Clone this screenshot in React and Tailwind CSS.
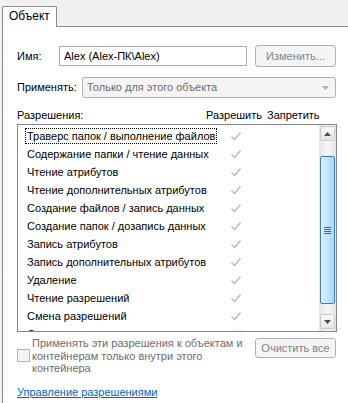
import React from 'react'

const perms = [
  'Траверс папок / выполнение файлов',
  'Содержание папки / чтение данных',
  'Чтение атрибутов',
  'Чтение дополнительных атрибутов',
  'Создание файлов / запись данных',
  'Создание папок / дозапись данных',
  'Запись атрибутов',
  'Запись дополнительных атрибутов',
  'Удаление',
  'Чтение разрешений',
  'Смена разрешений',
  'Смена владельца',
]

function Check(){
  return (
    <svg width="12" height="10" viewBox="0 0 12 10">
      <path d="M1.5 5.5 L4.5 8.5 L10.5 1.5" fill="none" stroke="#b8b8b8" strokeWidth="1.4" />
    </svg>
  )
}

function Arrow({ up }){
  return (
    <svg width="7" height="4" viewBox="0 0 7 4">
      {up ? <path d="M0 4 L3.5 0 L7 4 Z" fill="#4d4d4d" /> : <path d="M0 0 L3.5 4 L7 0 Z" fill="#4d4d4d" />}
    </svg>
  )
}

function Scrollbar(){
  return (
    <div className="w-[17px] flex flex-col items-stretch px-[1px] pt-[1px] bg-linear-to-r from-[#e6e6e6] via-[#f5f5f5] to-[#e6e6e6]">
      <div className="h-[15px] rounded-[2px] border border-[#c9c9c9] bg-linear-to-b from-[#fafafa] to-[#e4e4e4] flex items-center justify-center">
        <Arrow up />
      </div>
      <div className="h-[15px]" />
      <div className="h-[148px] rounded-[2px] border border-[#3c7fb1] bg-linear-to-r from-[#d9f0fc] via-[#bee6fd] to-[#a7d9f5] flex items-center justify-center">
        <div className="flex flex-col gap-[1px]">
          <div className="w-[7px] h-[1px] bg-[#3d6b8a]" />
          <div className="w-[7px] h-[1px] bg-[#3d6b8a]" />
          <div className="w-[7px] h-[1px] bg-[#3d6b8a]" />
          <div className="w-[7px] h-[1px] bg-[#3d6b8a]" />
        </div>
      </div>
      <div className="h-[10px]" />
      <div className="h-[15px] rounded-[2px] border border-[#c9c9c9] bg-linear-to-b from-[#fafafa] to-[#e4e4e4] flex items-center justify-center">
        <Arrow />
      </div>
    </div>
  )
}

export default function App(){
  return (
    <div className="w-[348px] h-[403px] overflow-hidden bg-[#f0f0f0] flex flex-col text-[11px] text-black whitespace-nowrap" style={{ fontFamily: '"Liberation Sans", Arial, sans-serif' }}>
      {/* Tab strip */}
      <div className="h-[27px] pt-[6px] pl-[2px] flex">
        <div className="relative z-10 w-[55px] h-[21px] bg-white border border-b-0 border-[#898c95] rounded-t-[2px] pl-[6px] leading-[19px] text-[12px]">
          Объект
        </div>
      </div>

      {/* Panel */}
      <div className="-mt-px ml-[2px] flex-1 bg-white border-l border-t border-[#898c95] pl-[14px] flex flex-col">
        {/* Name */}
        <div className="mt-[18px] h-[22px] flex items-center">
          <span className="w-[42px]">Имя:</span>
          <div className="w-[188px] h-[20px] border border-[#abadb3] pl-[4px] leading-[18px]">Alex (Alex-ПК\Alex)</div>
          <div className="ml-[8px] w-[81px] h-[22px] rounded-[3px] border border-[#adb2b5] bg-[#f4f4f4] text-[#838383] flex items-center justify-center">
            Изменить...
          </div>
        </div>

        {/* Apply to */}
        <div className="mt-[10px] h-[21px] flex items-center">
          <span className="w-[65px]">Применять:</span>
          <div className="w-[254px] h-[21px] rounded-[2px] border border-[#adb2b5] bg-[#f4f4f4] text-[#6d6d6d] pl-[4px] pr-[6px] flex items-center justify-between">
            <span>Только для этого объекта</span>
            <svg width="7" height="4" viewBox="0 0 7 4"><path d="M0 0 L3.5 4 L7 0 Z" fill="#b0b0b0" /></svg>
          </div>
        </div>

        {/* Permissions header */}
        <div className="mt-[10px] h-[14px] leading-[14px] flex">
          <span className="w-[189px]">Разрешения:</span>
          <span className="w-[61px]">Разрешить</span>
          <span>Запретить</span>
        </div>

        {/* List */}
        <div className="mt-[2px] w-[320px] h-[208px] border border-[#828790] flex overflow-hidden">
          <div className="flex-1 pt-[2px] overflow-hidden">
            {perms.map((p, i) => (
              <div key={p} className="h-[18px] flex items-center">
                <div className="w-[210px] pl-[7px]">
                  <span className={`px-[1px] leading-[14px] inline-block border ${i === 0 ? 'border-dotted border-black' : 'border-transparent'}`}>{p}</span>
                </div>
                <div className="w-[16px] flex justify-center"><Check /></div>
              </div>
            ))}
          </div>
          <Scrollbar />
        </div>

        {/* Inherit checkbox + clear */}
        <div className="mt-[5px] flex items-start">
          <div className="w-[238px] flex items-center">
            <div className="w-[13px] h-[13px] border border-[#b5b5b5] bg-[#f4f4f4]" />
            <div className="ml-[2px] leading-[12.5px] text-[#6d6d6d]">
              Применять эти разрешения к объектам и<br />
              контейнерам только внутри этого<br />
              контейнера
            </div>
          </div>
          <div className="mt-px w-[81px] h-[20px] rounded-[3px] border border-[#adb2b5] bg-[#f4f4f4] text-[#838383] flex items-center justify-center">
            Очистить все
          </div>
        </div>

        {/* Link */}
        <div className="mt-[10px] leading-[14px] text-[#0066cc] underline">Управление разрешениями</div>
      </div>
    </div>
  )
}
